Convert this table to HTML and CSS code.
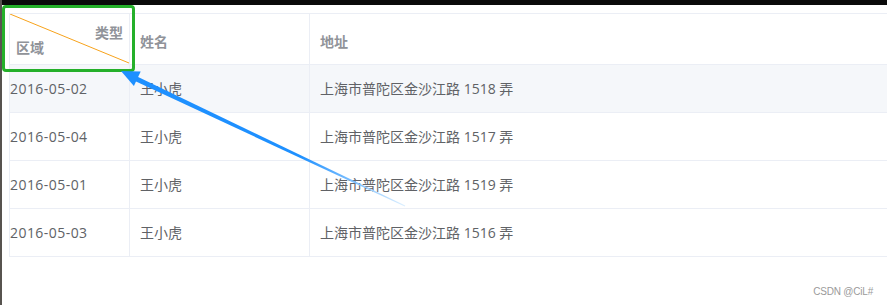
FILE: index.html
```html
<!DOCTYPE html>
<html lang="zh-CN">
<head>
<meta charset="utf-8">
<title>Table</title>
<link rel="stylesheet" href="styles.css">
</head>
<body>
<div class="topbar"></div>
<div class="page">
  <div class="table-wrap">
    <table class="el-table">
      <colgroup>
        <col class="c1">
        <col class="c2">
        <col class="c3">
      </colgroup>
      <thead>
        <tr>
          <th class="diag-cell">
            <div class="diag">
              <svg class="diag-line" width="120" height="50" viewBox="0 0 120 50" preserveAspectRatio="none"><line x1="0" y1="0" x2="119" y2="49" stroke="#f7a21b" stroke-width="1"/></svg>
              <span class="diag-type">类型</span>
              <span class="diag-area">区域</span>
            </div>
          </th>
          <th class="pl">姓名</th>
          <th class="pl last">地址</th>
        </tr>
      </thead>
      <tbody>
        <tr class="hover"><td class="first">2016-05-02</td><td class="pl">王小虎</td><td class="pl last">上海市普陀区金沙江路 1518 弄</td></tr>
        <tr><td class="first">2016-05-04</td><td class="pl">王小虎</td><td class="pl last">上海市普陀区金沙江路 1517 弄</td></tr>
        <tr><td class="first">2016-05-01</td><td class="pl">王小虎</td><td class="pl last">上海市普陀区金沙江路 1519 弄</td></tr>
        <tr><td class="first">2016-05-03</td><td class="pl">王小虎</td><td class="pl last">上海市普陀区金沙江路 1516 弄</td></tr>
      </tbody>
    </table>
  </div>
</div>
<div class="highlight"></div>
<svg class="arrow" width="887" height="305" viewBox="0 0 887 305">
  <defs>
    <linearGradient id="fade" gradientUnits="userSpaceOnUse" x1="300" y1="156" x2="405" y2="206">
      <stop offset="0" stop-color="#1e90ff"/>
      <stop offset="1" stop-color="#dcefff"/>
    </linearGradient>
  </defs>
  <polygon points="134.4,80.8 136.6,76.2 405.2,205.6 404.8,206.5" fill="url(#fade)"/>
  <polygon points="121,71 140.7,71.5 133.9,85.9" fill="#1e90ff"/>
</svg>
<div class="watermark">CSDN @CiL#</div>
</body>
</html>
```
FILE: styles.css
```css
html, body {
  margin: 0;
  padding: 0;
  width: 887px;
  height: 305px;
  overflow: hidden;
  background: #ffffff;
}
body {
  position: relative;
  font-family: "Open Sans", "Noto Sans CJK SC", sans-serif;
  font-size: 14px;
  color: #606266;
  border-left: 2px solid #57534f;
  box-sizing: border-box;
}
.topbar {
  height: 5px;
  background: #0a0a0a;
}
.page {
  padding: 8px 0 0 7px;
}
.table-wrap {
  width: 878px;
}
.el-table {
  border-collapse: collapse;
  table-layout: fixed;
  width: 878px;
}
.c1 { width: 120px; }
.c2 { width: 180px; }
.c3 { width: 578px; }
.el-table th,
.el-table td {
  border: 1px solid #ebeef5;
  text-align: left;
  padding: 0;
}
.el-table .last {
  border-right: none;
}
.el-table thead th {
  height: 51px;
  font-weight: bold;
  color: #909399;
  vertical-align: middle;
  padding-top: 3px;
  box-sizing: border-box;
  font-family: "Noto Sans CJK SC", sans-serif;
}
.el-table td {
  padding: 12px 0;
  line-height: 23px;
}
.el-table tbody tr.hover td {
  background: #f5f7fa;
}
.el-table td.first {
  padding-left: 0;
  letter-spacing: 0.45px;
}
.el-table .pl {
  padding-left: 10px;
}
.el-table thead th.diag-cell {
  padding: 0;
  vertical-align: top;
}
.diag {
  position: relative;
  height: 50px;
  display: flex;
  flex-direction: column;
  padding-top: 8px;
  box-sizing: border-box;
}
.diag-line {
  position: absolute;
  left: 0;
  top: 0;
}
.diag-type {
  align-self: flex-end;
  padding-right: 6px;
  line-height: 20px;
}
.diag-area {
  align-self: flex-start;
  padding-left: 6px;
  line-height: 20px;
  margin-top: -5px;
}
.highlight {
  position: absolute;
  left: 0px;
  top: 5px;
  width: 127px;
  height: 61px;
  border: 3px solid #25b02a;
  border-radius: 4px;
}
.arrow {
  position: absolute;
  left: -2px;
  top: 0;
}
.watermark {
  position: absolute;
  right: 14px;
  top: 286px;
  font-family: "Liberation Sans", sans-serif;
  font-size: 10px;
  letter-spacing: -0.2px;
  color: #9a9a9a;
}
```
